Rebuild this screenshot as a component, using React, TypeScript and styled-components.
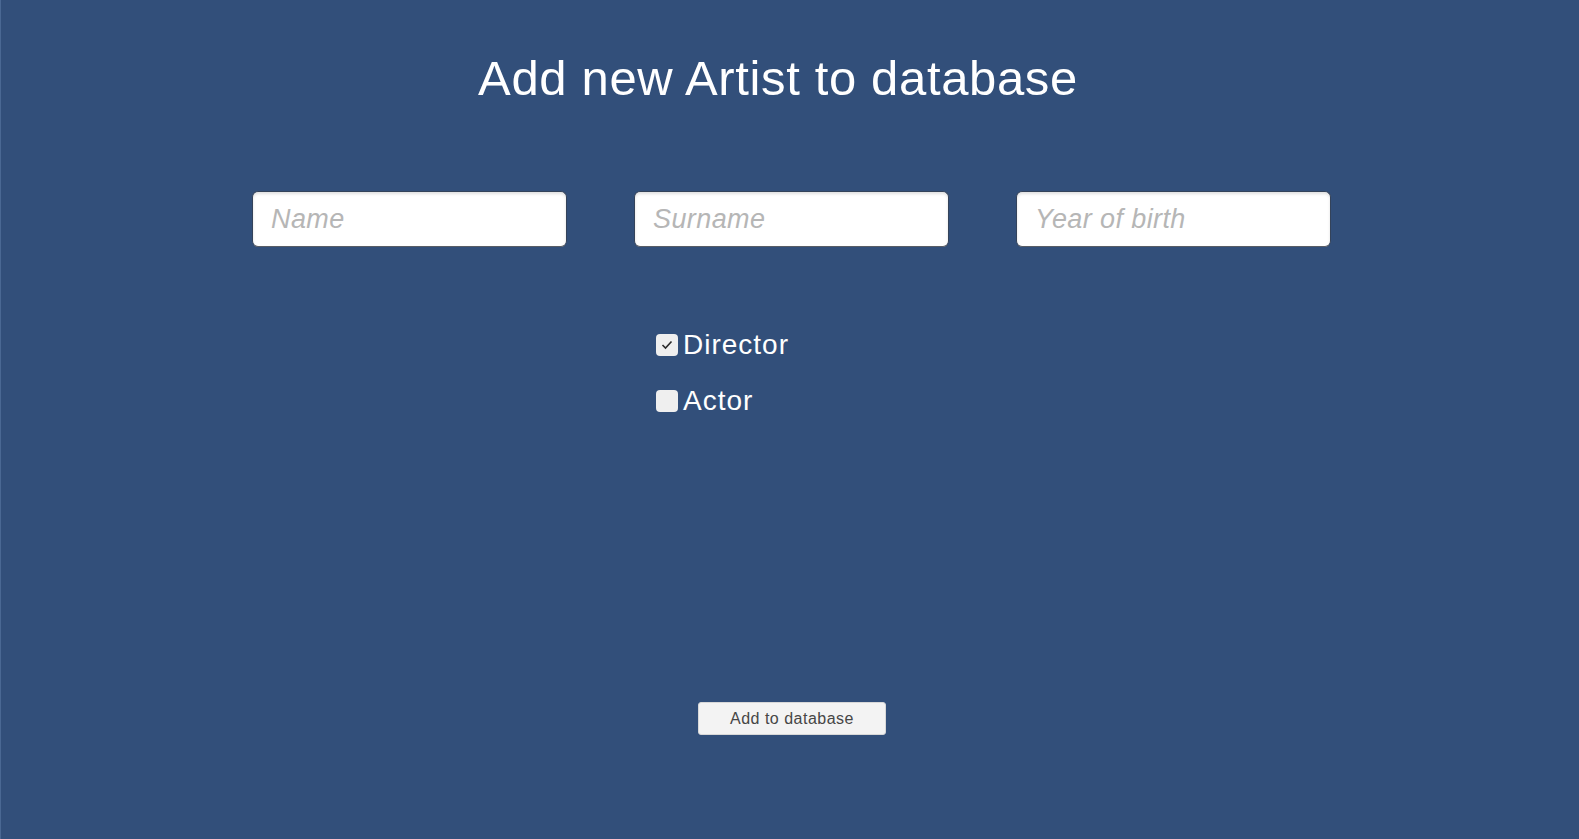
import React, { useState } from 'react'
import styled, { createGlobalStyle } from 'styled-components'

const GlobalStyle = createGlobalStyle`
  html, body {
    margin: 0;
    padding: 0;
    background: #324f7a;
  }
  body {
    font-family: 'Liberation Sans', Arial, sans-serif;
  }
`

const Page = styled.div`
  min-height: 100vh;
  box-sizing: border-box;
  border-left: 1px solid #4a6893;
  display: flex;
  flex-direction: column;
  background: #324f7a;
`

const Title = styled.h1`
  margin: 54px 0 0;
  padding-right: 24px;
  font-size: 49px;
  line-height: 49px;
  letter-spacing: 0.65px;
  font-weight: normal;
  color: #ffffff;
  text-align: center;
`

const InputRow = styled.div`
  display: flex;
  gap: 67px;
  margin-top: 88px;
  padding-left: 251px;
`

const TextField = styled.input`
  box-sizing: border-box;
  width: 315px;
  height: 56px;
  padding: 0 0 0 18px;
  border: 1px solid #34435a;
  border-bottom-color: #585d66;
  border-radius: 6px;
  background: #ffffff;
  box-shadow: inset 0 2px 3px rgba(0, 0, 0, 0.12);
  font-family: 'Liberation Sans', Arial, sans-serif;
  font-size: 27px;
  letter-spacing: 0.4px;
  font-style: italic;
  color: #333;
  outline: none;

  &::placeholder {
    color: #b6b6b6;
  }
`

const Checks = styled.div`
  display: flex;
  flex-direction: column;
  gap: 28px;
  margin-top: 84px;
  padding-left: 655px;
`

const CheckRow = styled.label`
  display: flex;
  align-items: center;
  gap: 5px;
  height: 28px;
  font-size: 28px;
  line-height: 28px;
  letter-spacing: 1px;
  color: #ffffff;
  cursor: pointer;
`

const Box = styled.span`
  width: 22px;
  height: 22px;
  border-radius: 4px;
  background: #efefef;
  display: flex;
  align-items: center;
  justify-content: center;
`

const ButtonRow = styled.div`
  display: flex;
  margin-top: 287px;
  padding-left: 697px;
`

const AddButton = styled.button`
  width: 188px;
  height: 33px;
  border: 1px solid #d8d8d8;
  border-radius: 3px;
  background: #f3f3f3;
  color: #464646;
  font-family: 'Liberation Sans', Arial, sans-serif;
  font-size: 16px;
  letter-spacing: 0.5px;
  padding: 0;
  cursor: pointer;
`

const CheckMark = () => (
  <svg width='12' height='10' viewBox='0 0 12 10'>
    <polyline points='1.5,5 4.5,8 10.5,1.5' fill='none' stroke='#2b2b2b' strokeWidth='1.6' />
  </svg>
)

const Check = ({ label, checked, onToggle }: { label: string; checked: boolean; onToggle: () => void }) => (
  <CheckRow onClick={onToggle}>
    <Box>{checked && <CheckMark />}</Box>
    {label}
  </CheckRow>
)

export default function App() {
  const [director, setDirector] = useState(true)
  const [actor, setActor] = useState(false)

  return (
    <Page>
      <GlobalStyle />
      <Title>Add new Artist to database</Title>
      <InputRow>
        <TextField placeholder='Name' />
        <TextField placeholder='Surname' />
        <TextField placeholder='Year of birth' />
      </InputRow>
      <Checks>
        <Check label='Director' checked={director} onToggle={() => setDirector(!director)} />
        <Check label='Actor' checked={actor} onToggle={() => setActor(!actor)} />
      </Checks>
      <ButtonRow>
        <AddButton>Add to database</AddButton>
      </ButtonRow>
    </Page>
  )
}
